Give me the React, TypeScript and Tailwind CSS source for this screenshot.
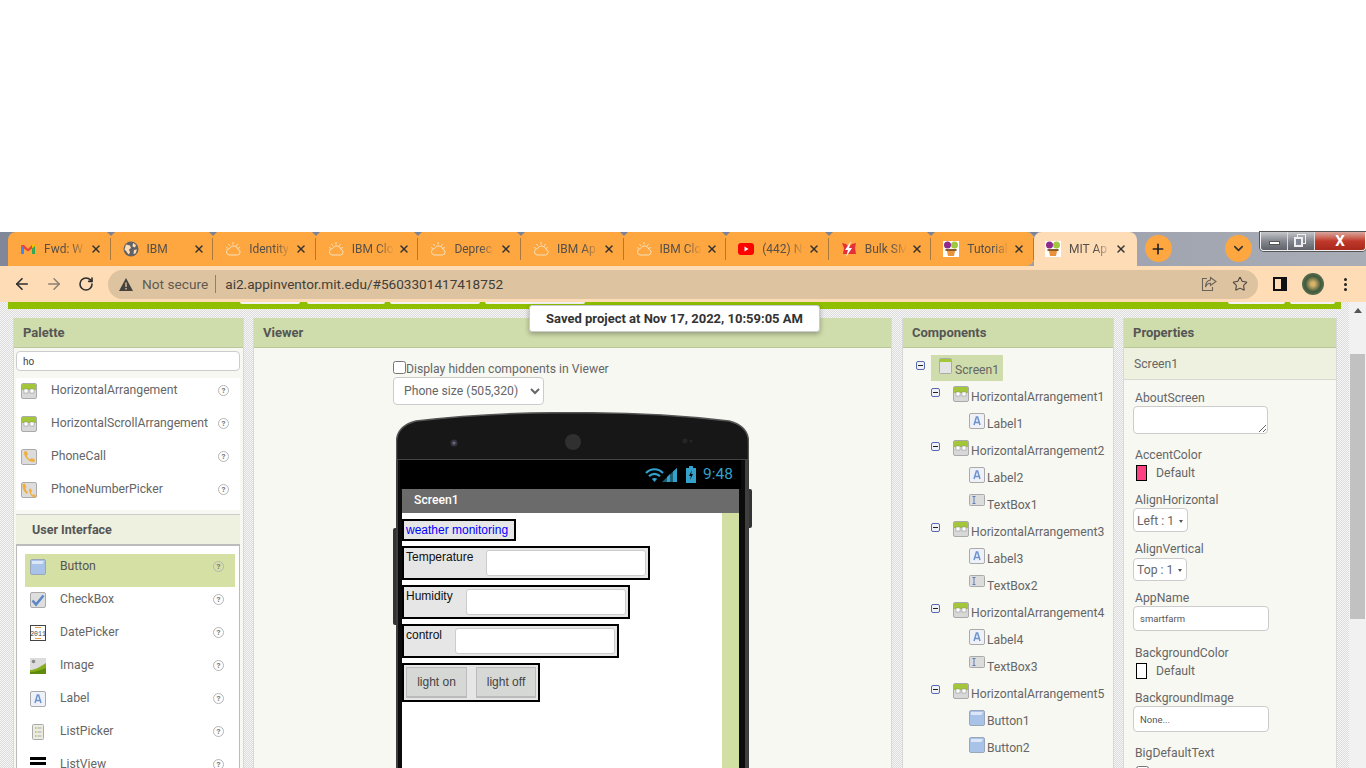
import React from "react"
import { ArrowLeft, ArrowRight, RotateCw, Star, ChevronDown, Plus, X } from "lucide-react"

const TABS = [
  { title: "Fwd: W", icon: "gmail" },
  { title: "IBM", icon: "globe" },
  { title: "Identity", icon: "cloud" },
  { title: "IBM Clo", icon: "cloud" },
  { title: "Deprec", icon: "cloud" },
  { title: "IBM Ap", icon: "cloud" },
  { title: "IBM Clo", icon: "cloud" },
  { title: "(442) N", icon: "youtube" },
  { title: "Bulk SM", icon: "bolt" },
  { title: "Tutorial", icon: "mit" },
]

function TabIcon({ name }: { name: string }) {
  if (name === "gmail")
    return (
      <svg width="16" height="16" viewBox="0 0 16 16">
        <path d="M1 4v9h3V7z" fill="#4285f4" />
        <path d="M15 4v9h-3V7z" fill="#34a853" />
        <path d="M1 4l3 0 4 4 4-4 3 0-3 3.500-4 3-4-3z" fill="#ea4335" />
        <path d="M12 3.500h3V5l-3 2.500z" fill="#fbbc04" />
      </svg>
    )
  if (name === "globe")
    return (
      <svg width="16" height="16" viewBox="0 0 16 16">
        <circle cx="8" cy="8" r="7.500" fill="#5f6368" />
        <path d="M3 3.500l4 1 1 2.500-2 1.500 1 3-1.500 2-2-3-2-2zM10 2l3 2-1 2.500-2.500-1zM11 9l3-.5-1.500 4-2 .5z" fill="#fedcb6" />
      </svg>
    )
  if (name === "cloud")
    return (
      <svg width="16" height="16" viewBox="0 0 16 16" fill="none" stroke="#f4e2bd" strokeWidth="1">
        <path d="M4 14h8.500a2.800 2.800 0 0 0 .5-5.500A4.500 4.500 0 0 0 4.500 7.500 3.300 3.300 0 0 0 4 14z" />
        <path d="M8 1v2.500M3.500 3l1.200 1.800M12.500 3l-1.200 1.800M1 6.500l1.800.8M15 6.500l-1.800.8" />
      </svg>
    )
  if (name === "youtube")
    return (
      <svg width="16" height="16" viewBox="0 0 16 16">
        <rect x="0" y="2" width="16" height="12" rx="3" fill="#f00" />
        <path d="M6.500 5.500v5l4-2.500z" fill="#fff" />
      </svg>
    )
  if (name === "bolt")
    return (
      <svg width="16" height="16" viewBox="0 0 16 16">
        <path d="M1 2l4 1 3 3 3-3 4-1-1 5 1 6H2l1-6z" fill="#e5303a" />
        <path d="M10 0L4 9h3l-2 7 6-9H8z" fill="#fff" />
      </svg>
    )
  return (
    <svg width="16" height="16" viewBox="0 0 16 16">
      <rect width="16" height="16" fill="#fff" />
      <circle cx="4.500" cy="4" r="3.500" fill="#8e2a8b" />
      <circle cx="11.500" cy="4" r="3.500" fill="#9fc93c" />
      <rect x="2.500" y="8" width="11" height="2" fill="#8a5a2b" />
      <path d="M4 10h8l-1 5H5z" fill="#e8923a" />
    </svg>
  )
}

function Tab({ title, icon, active }: { title: string; icon: string; active?: boolean }) {
  return (
    <div
      className={
        active
          ? "flex items-center h-[34px] w-[103px] bg-[#fedcb6] rounded-t-[8px] pl-[11px] shrink-0"
          : "flex items-center h-[34px] w-[102.6px] pl-[12px] shrink-0 relative"
      }
    >
      <TabIcon name={icon} />
      <span className="ml-[8px] w-[44px] overflow-hidden whitespace-nowrap text-[12px] text-[#55504a] [mask-image:linear-gradient(90deg,#000_60%,transparent_95%)]">
        {title}
      </span>
      <X size={12} strokeWidth={3} className="ml-[2px] text-[#333]" />
      {!active && <span className="absolute right-0 top-[6px] h-[22px] w-px bg-[#a87a3e]" />}
      {!active && <span className="absolute right-[-4px] top-0 w-0 h-0 border-x-[4px] border-x-transparent border-t-[4px] border-t-[#7b8296]" />}
    </div>
  )
}

function WindowControls() {
  return (
    <div className="ml-auto flex h-[19px] w-[106px] rounded-b-[4px] border border-t-0 border-[#f0f1f4] overflow-hidden shadow-[0_0_0_1px_#555]">
      <div className="w-[27px] bg-gradient-to-b from-[#c4c6ca] via-[#85888f] to-[#5f6268] border-r border-[#d8dade] flex items-center justify-center">
        <span className="w-[11px] h-[4px] bg-white mt-[3px] border border-[#555]" />
      </div>
      <div className="relative w-[27px] bg-gradient-to-b from-[#c4c6ca] via-[#85888f] to-[#5f6268] border-r border-[#d8dade]">
        <span className="absolute left-[9px] top-[2px] w-[9px] h-[10px] border border-[#eee]" />
        <span className="absolute left-[6px] top-[5px] w-[9px] h-[10px] border-2 border-[#eee] bg-[#7f8592]" />
      </div>
      <div className="flex-1 bg-gradient-to-b from-[#d8a59c] via-[#c0392b] to-[#a8281c] flex items-center justify-center text-white font-bold text-[15px] leading-none">
        X
      </div>
    </div>
  )
}

function TabStrip() {
  return (
    <div className="h-[34px] flex items-start bg-gradient-to-r from-[#7f8798] via-[#8d93a4] to-[#a9adb6]">
      <div className="ml-[8px] flex bg-[#fea63f] rounded-t-[8px] rounded-br-[8px]">
        {TABS.map((t, i) => (
          <Tab key={i} title={t.title} icon={t.icon} />
        ))}
      </div>
      <Tab title="MIT Ap" icon="mit" active />
      <div className="ml-[8px] mt-[3px] w-[27px] h-[27px] rounded-full bg-[#fea63f] flex items-center justify-center text-[#222]">
        <Plus size={16} strokeWidth={2.500} />
      </div>
      <div className="ml-[53px] mt-[3px] w-[27px] h-[27px] rounded-full bg-[#fea63f] flex items-center justify-center text-[#333]">
        <ChevronDown size={15} strokeWidth={2.500} />
      </div>
      <WindowControls />
    </div>
  )
}

function Toolbar() {
  return (
    <div className="h-[36px] bg-[#fedcb6] flex items-center text-[#2e2e2e]">
      <ArrowLeft size={18} strokeWidth={2.200} className="ml-[13px]" />
      <ArrowRight size={18} strokeWidth={2} className="ml-[14px] text-[#8b8073]" />
      <RotateCw size={16} strokeWidth={2.400} className="ml-[15px]" />
      <div className="ml-[14px] w-[1150px] h-[29px] rounded-full bg-[#dec3a0] flex items-center pl-[11px]">
        <svg width="14" height="13" viewBox="0 0 14 13">
          <path d="M7 0l7 13H0z" fill="#45413c" />
          <rect x="6.300" y="4.500" width="1.400" height="4.500" fill="#dec3a0" />
          <rect x="6.300" y="10" width="1.400" height="1.500" fill="#dec3a0" />
        </svg>
        <span className="ml-[9px] text-[13.700px] text-[#5f5a52]">Not secure</span>
        <span className="ml-[7px] h-[18px] w-px bg-[#8a8174]" />
        <span className="ml-[9px] text-[13.600px] text-[#413d37]">ai2.appinventor.mit.edu/#5603301417418752</span>
        <svg className="ml-auto" width="16" height="16" viewBox="0 0 16 16" fill="none" stroke="#6a645b" strokeWidth="1.100">
          <path d="M6 2.500H1.500v12h10V11" />
          <path d="M9.500 1.500L15 5.500 9.500 9.500V7.200C7 7.200 5.500 8.500 4.500 11 4.500 7.500 6.500 4.500 9.500 4z" />
        </svg>
        <Star size={16} strokeWidth={1.600} className="ml-[15px] mr-[10px] text-[#4a453e]" />
      </div>
      <svg className="ml-[15px]" width="14" height="14" viewBox="0 0 14 14">
        <rect width="14" height="14" fill="#111" />
        <rect x="2" y="2" width="6" height="10" fill="#fedcb6" />
      </svg>
      <div className="ml-[15px] w-[22px] h-[22px] rounded-full bg-[radial-gradient(circle,#d9b36a_12%,#3f5a3c_50%,#7d8a6c_100%)]" />
      <div className="ml-[20px] flex flex-col gap-[2px]">
        <span className="w-[3px] h-[3px] rounded-full bg-[#222]" />
        <span className="w-[3px] h-[3px] rounded-full bg-[#222]" />
        <span className="w-[3px] h-[3px] rounded-full bg-[#222]" />
      </div>
    </div>
  )
}

function Ico({ name }: { name: string }) {
  if (name === "ha")
    return (
      <svg width="16" height="16" viewBox="0 0 16 16" className="shrink-0">
        <rect x="0.500" y="0.500" width="15" height="15" rx="1.500" fill="#d8d8d8" stroke="#aaa" />
        <path d="M1 2a1 1 0 0 1 1-1h12a1 1 0 0 1 1 1v5H1z" fill="#a4c639" />
        <rect x="3" y="6" width="4" height="4" fill="#fff" stroke="#888" strokeWidth="0.500" />
        <rect x="9" y="6" width="4" height="4" fill="#fff" stroke="#888" strokeWidth="0.500" />
      </svg>
    )
  if (name === "label")
    return (
      <svg width="16" height="16" viewBox="0 0 16 16" className="shrink-0">
        <rect x="0.500" y="0.500" width="15" height="15" rx="1.500" fill="#eef1f7" stroke="#aaa" />
        <path d="M5 12L7.400 4h1.200L11 12M6 9.500h4" fill="none" stroke="#6d93cf" strokeWidth="1.500" />
      </svg>
    )
  if (name === "textbox")
    return (
      <svg width="16" height="12" viewBox="0 0 16 12" className="shrink-0">
        <rect x="0.500" y="0.500" width="15" height="11" rx="1" fill="#dcdcdc" stroke="#aaa" />
        <path d="M3.500 2.500h3M3.500 9.500h3M5 2.500v7" fill="none" stroke="#5f7fb5" />
      </svg>
    )
  if (name === "button")
    return (
      <svg width="16" height="16" viewBox="0 0 16 16" className="shrink-0">
        <rect x="0.500" y="0.500" width="15" height="15" rx="1.500" fill="#a9c2e8" stroke="#9aa7bb" />
        <path d="M2 2h12l-1.500 3H2z" fill="#dbe6f6" />
      </svg>
    )
  if (name === "check")
    return (
      <svg width="16" height="16" viewBox="0 0 16 16" className="shrink-0">
        <rect x="0.500" y="0.500" width="15" height="15" rx="1.500" fill="#dedede" stroke="#aaa" />
        <path d="M2.500 8.500l3.500 4 7.500-9" fill="none" stroke="#5b86c7" strokeWidth="2.500" />
      </svg>
    )
  if (name === "date")
    return (
      <svg width="16" height="16" viewBox="0 0 16 16" className="shrink-0">
        <rect x="0.500" y="0.500" width="15" height="15" fill="#fff" stroke="#444" />
        <path d="M5 2.500h6M5 13.500h6" stroke="#e8a04a" />
        <text x="8" y="10.500" fontSize="6.500" fontFamily="Liberation Mono" textAnchor="middle" fill="#444">2011</text>
      </svg>
    )
  if (name === "image")
    return (
      <svg width="16" height="16" viewBox="0 0 16 16" className="shrink-0">
        <rect width="16" height="16" fill="#dcdcdc" />
        <circle cx="3.500" cy="3.500" r="1.800" fill="#888" />
        <path d="M0 12c5 0 8-2 16-7v11H0z" fill="#86ad1c" />
        <path d="M0 14c6 0 10-2 16-4v6H0z" fill="#5f8a0c" />
      </svg>
    )
  if (name === "list")
    return (
      <svg width="16" height="16" viewBox="0 0 16 16" className="shrink-0">
        <rect x="2.500" y="0.500" width="11" height="15" rx="1" fill="#ecece2" stroke="#aaa" />
        <path d="M5 4h1.500M5 8h1.500M5 12h1.500" stroke="#a4c639" strokeWidth="1.500" />
        <path d="M7.500 4h4M7.500 8h4M7.500 12h4" stroke="#aaa" />
      </svg>
    )
  if (name === "listview")
    return (
      <svg width="16" height="16" viewBox="0 0 16 16" className="shrink-0">
        <rect y="0" width="16" height="3" fill="#000" />
        <rect y="5" width="16" height="3" fill="#000" />
      </svg>
    )
  if (name === "phone")
    return (
      <svg width="16" height="16" viewBox="0 0 16 16" className="shrink-0">
        <rect x="0.500" y="0.500" width="15" height="15" rx="1.500" fill="#dcdcdc" stroke="#aaa" />
        <path d="M3 2.500L5.500 2 7 5.500 5.700 6.800c.5 1.500 2 3 3.500 3.500L10.500 9 14 10.500 13.500 13c-5 1-11-5-10.500-10.500z" fill="#f0b040" />
      </svg>
    )
  if (name === "phonepick")
    return (
      <svg width="16" height="16" viewBox="0 0 16 16" className="shrink-0">
        <rect x="0.500" y="0.500" width="15" height="15" rx="1.500" fill="#dcdcdc" stroke="#aaa" />
        <path d="M1.500 2L4 1.500 5.500 5 4.500 6c.3 1.500 1 3 2.500 4L6 12C3 10 1 6 1.500 2z" fill="#f0b040" />
        <path d="M8 7l2-.5 1 3-1 1c.3 1 .6 1.500 1.500 2.500L13 12l2 2-1 1.500C10 15 8 11 8 7z" fill="#f0b040" />
      </svg>
    )
  return (
    <svg width="13" height="16" viewBox="0 0 13 16" className="shrink-0">
      <rect x="0.500" y="0.500" width="12" height="15" rx="1" fill="#e4e4e4" stroke="#aaa" />
      <rect x="1" y="1" width="11" height="3" fill="#a4c639" />
    </svg>
  )
}

function Help() {
  return (
    <span className="w-[11px] h-[11px] rounded-full border border-[#b5b5b5] text-[8px] leading-[9px] font-bold text-[#777] text-center shrink-0">
      ?
    </span>
  )
}

function PaletteRow({ icon, name, active }: { icon: string; name: string; active?: boolean }) {
  return (
    <div className={active ? "h-[33px] flex pl-[5px] pr-[11px] bg-[#d5e0a5] text-[#555]" : "h-[33px] flex pl-[5px] pr-[11px] text-[#666]"}>
      <div className="mt-[5px]">
        <Ico name={icon} />
      </div>
      <span className="ml-[14px] mt-[5px] text-[12.200px] leading-[14px]">{name}</span>
      <span className="ml-auto mt-[7px] flex">
        <Help />
      </span>
    </div>
  )
}

function PanelHead({ title }: { title: string }) {
  return (
    <div className="h-[30px] shrink-0 bg-[#cfdcab] border-b border-[#b9c79a] flex items-center pl-[9px] text-[13px] font-bold text-[#555]">
      {title}
    </div>
  )
}

function Palette() {
  return (
    <div className="w-[231px] shrink-0 bg-[#f7f8f2] flex flex-col border-x border-[#d8d8d8]">
      <PanelHead title="Palette" />
      <div className="ml-[2px] mr-[3px] pt-[3px]">
        <input readOnly value="ho" className="block w-full h-[20px] bg-white border border-[#ccc] rounded-[4px] px-[6px] text-[10px] text-[#444] outline-none" />
      </div>
      <div className="ml-[2px] mr-[3px] mt-[7px] bg-white h-[132px]">
        <PaletteRow icon="ha" name="HorizontalArrangement" />
        <PaletteRow icon="ha" name="HorizontalScrollArrangement" />
        <PaletteRow icon="phone" name="PhoneCall" />
        <PaletteRow icon="phonepick" name="PhoneNumberPicker" />
      </div>
      <div className="ml-[2px] mr-[3px] mt-[4px] h-[32px] shrink-0 bg-[#eef1e0] border-t border-b-2 border-t-[#ccc] border-b-[#bbb] flex items-center pl-[16px] pt-[2px] text-[12.500px] font-bold text-[#555]">
        User Interface
      </div>
      <div className="ml-[2px] mr-[3px] bg-white border-x border-[#bbb] pt-[8px] pl-[8px] pr-[4px] flex-1">
        <PaletteRow icon="button" name="Button" active />
        <PaletteRow icon="check" name="CheckBox" />
        <PaletteRow icon="date" name="DatePicker" />
        <PaletteRow icon="image" name="Image" />
        <PaletteRow icon="label" name="Label" />
        <PaletteRow icon="list" name="ListPicker" />
        <PaletteRow icon="listview" name="ListView" />
      </div>
    </div>
  )
}

function PhoneRow({ width, height, children }: { width: string; height: string; children: React.ReactNode }) {
  return <div className={`${width} ${height} border-[2px] border-black bg-[#e6e6e6] flex shrink-0 font-['Liberation_Sans',sans-serif] text-[12px] leading-[14px]`}>{children}</div>
}

function Phone() {
  return (
    <div className="relative ml-[142px] mt-[7px] w-[353px] h-[400px] flex flex-col shrink-0">
      <div className="absolute left-[-3px] top-[116px] w-[3px] h-[97px] bg-[#333] rounded-l-[2px]" />
      <div className="absolute right-[-3px] top-[77px] w-[3px] h-[39px] bg-[#333] rounded-r-[2px]" />
      <svg width="353" height="48" viewBox="0 0 353 48" className="block shrink-0">
        <path d="M0.500 48V30Q0.500 14 20 9Q95 0 176 0.800Q258 0 333 9Q352.500 14 352.500 30V48z" fill="#171717" stroke="#555" strokeWidth="1.500" />
        <circle cx="58" cy="31" r="3.500" fill="#33333e" />
        <circle cx="58" cy="31" r="1.500" fill="#6a6a88" />
        <circle cx="177" cy="30" r="8" fill="#303030" />
        <circle cx="289" cy="29" r="2.500" fill="#262626" />
        <circle cx="295" cy="29" r="1.500" fill="#262626" />
      </svg>
      <div className="flex-1 min-h-0 flex flex-col bg-[#0c0c0c] border-l-2 border-r-[4px] border-[#3f3f3f]">
        <div className="ml-[2px] w-[341px] h-[29px] bg-black shrink-0 flex items-center justify-end pr-[8px]">
          <svg width="33" height="16" viewBox="0 0 33 16" fill="none">
            <path d="M1 6C6 1 13 1 18 6" stroke="#33a1c9" strokeWidth="2.200" />
            <path d="M4 9.200C7.500 6.200 11.500 6.200 15 9.200" stroke="#33a1c9" strokeWidth="2.200" />
            <path d="M6.800 11.800C8.500 10.600 10.500 10.600 12.200 11.800L9.500 15z" fill="#33a1c9" />
            <path d="M17 15L32 1v14z" fill="#1e5f78" />
            <path d="M22 15v-5l3-3v8zM28 15V4.500l4-3.500v14z" fill="#33a1c9" />
          </svg>
          <svg className="ml-[8px]" width="10" height="17" viewBox="0 0 10 17">
            <rect x="0" y="2" width="10" height="15" fill="#33a1c9" />
            <rect x="3" y="0" width="4" height="2" fill="#33a1c9" />
            <path d="M6 4L3 10h2l-1 4 3-6H5z" fill="#000" />
          </svg>
          <span className="ml-[7px] text-[15.500px] text-[#33a1c9]">9:48</span>
        </div>
        <div className="ml-[4px] w-[337px] h-[24px] bg-[#6b6b6b] shrink-0 flex items-center pl-[12px] pb-[2px] text-white text-[12.200px] font-medium">Screen1</div>
        <div className="ml-[4px] w-[337px] flex-1 bg-white flex">
          <div className="w-[320px] flex flex-col gap-[5px] pt-[6px]">
            <PhoneRow width="w-[114px]" height="h-[22px]">
              <span className="ml-[2px] mt-[2px] text-[#0000ff]">weather monitoring</span>
            </PhoneRow>
            <PhoneRow width="w-[248px]" height="h-[34px]">
              <span className="ml-[2px] mt-[2px] w-[80px] text-[#111]">Temperature</span>
              <span className="mt-[2px] w-[160px] h-[26px] rounded-[3px] bg-white border border-[#ccc]" />
            </PhoneRow>
            <PhoneRow width="w-[228px]" height="h-[34px]">
              <span className="ml-[2px] mt-[2px] w-[60px] text-[#111]">Humidity</span>
              <span className="mt-[2px] w-[160px] h-[26px] rounded-[3px] bg-white border border-[#ccc]" />
            </PhoneRow>
            <PhoneRow width="w-[217px]" height="h-[34px]">
              <span className="ml-[2px] mt-[2px] w-[49px] text-[#111]">control</span>
              <span className="mt-[2px] w-[160px] h-[26px] rounded-[3px] bg-white border border-[#ccc]" />
            </PhoneRow>
            <PhoneRow width="w-[138px]" height="h-[39px]">
              <span className="ml-[2px] mt-[2px] w-[61px] h-[31px] bg-[#d6d8d6] border border-[#bbb] border-b-2 flex items-center justify-center text-[#444]">light on</span>
              <span className="ml-[9px] mt-[2px] w-[60px] h-[31px] bg-[#d6d8d6] border border-[#bbb] border-b-2 flex items-center justify-center text-[#444]">light off</span>
            </PhoneRow>
          </div>
          <div className="w-[17px] bg-[#d2dfa3]" />
        </div>
      </div>
    </div>
  )
}

function Viewer() {
  return (
    <div className="ml-[9px] w-[639px] shrink-0 bg-[#f7f8f2] flex flex-col border-x border-[#d8d8d8]">
      <PanelHead title="Viewer" />
      <div className="pl-[139px] mt-[13px] flex items-center h-[13px] text-[12.200px] text-[#666]">
        <input type="checkbox" readOnly className="w-[13px] h-[13px] m-0" />
        <span className="mt-[4px]">Display hidden components in Viewer</span>
      </div>
      <div className="pl-[139px] mt-[3px]">
        <select defaultValue="p" className="block w-[151px] h-[28px] bg-white border border-[#ccc] rounded-[4px] pl-[6px] text-[12.200px] text-[#666]">
          <option value="p">Phone size (505,320)</option>
        </select>
      </div>
      <Phone />
    </div>
  )
}

const TREE = [
  ["ha", "HorizontalArrangement1"], ["label", "Label1"],
  ["ha", "HorizontalArrangement2"], ["label", "Label2"], ["textbox", "TextBox1"],
  ["ha", "HorizontalArrangement3"], ["label", "Label3"], ["textbox", "TextBox2"],
  ["ha", "HorizontalArrangement4"], ["label", "Label4"], ["textbox", "TextBox3"],
  ["ha", "HorizontalArrangement5"], ["button", "Button1"], ["button", "Button2"],
]

function Minus() {
  return (
    <span className="w-[9px] h-[9px] shrink-0 rounded-[2px] border border-[#5a6ab0] bg-[#f0f2fa] flex items-center justify-center">
      <span className="w-[5px] h-px bg-[#222]" />
    </span>
  )
}

function Components() {
  return (
    <div className="ml-[10px] w-[212px] shrink-0 bg-[#f7f8f2] flex flex-col border-x border-[#d8d8d8]">
      <PanelHead title="Components" />
      <div className="pl-[13px] pt-[7px] text-[12.200px] leading-[14px] text-[#666]">
        <div className="flex h-[26px]">
          <div className="mt-[6px]"><Minus /></div>
          <div className="ml-[6px] w-[72px] bg-[#cfdcab] flex pl-[8px] pt-[3px]">
            <Ico name="screen" />
            <span className="ml-[3px] mt-[5px]">Screen1</span>
          </div>
        </div>
        <div className="pl-[15px] pt-[2px]">
          {TREE.map(([icon, name]) =>
            icon === "ha" ? (
              <div key={name} className="flex h-[27px]">
                <div className="mt-[5px]"><Minus /></div>
                <div className="ml-[13px] mt-[3px]"><Ico name="ha" /></div>
                <span className="ml-[2px] mt-[7px] whitespace-nowrap">{name}</span>
              </div>
            ) : (
              <div key={name} className="flex h-[27px] pl-[38px]">
                <div className="mt-[3px]"><Ico name={icon} /></div>
                <span className="ml-[2px] mt-[7px]">{name}</span>
              </div>
            )
          )}
        </div>
      </div>
    </div>
  )
}

function Prop({ label, mt }: { label: string; mt: string }) {
  return <div className={`${mt} ml-[2px] h-[14px] text-[12.200px] leading-[16px] text-[#666]`}>{label}</div>
}

function Swatch({ color, mt }: { color: string; mt: string }) {
  return (
    <div className={`${mt} flex items-center ml-[3px] h-[16px] text-[12.200px] text-[#666]`}>
      <span className={`w-[11px] h-[16px] border border-black ${color}`} />
      <span className="ml-[9px]">Default</span>
    </div>
  )
}

function PropSelect({ text, w, h, mt }: { text: string; w: string; h: string; mt: string }) {
  return (
    <div className={`${mt} ${w} ${h} bg-white border border-[#ccc] rounded-[4px] flex items-center pl-[3px] pt-[2px] text-[12.200px] text-[#666]`}>
      {text}
      <span className="ml-[5px] w-0 h-0 border-x-[2.500px] border-x-transparent border-t-[3px] border-t-[#555]" />
    </div>
  )
}

function Properties() {
  const inputCls = "w-[136px] bg-white border border-[#ccc] rounded-[4px] px-[6px] text-[9.500px] text-[#555] outline-none block"
  return (
    <div className="ml-[9px] w-[214px] shrink-0 bg-[#f7f8f2] flex flex-col border-x border-[#d8d8d8]">
      <PanelHead title="Properties" />
      <div className="h-[32px] shrink-0 bg-[#eef1e0] border-b border-[#d8d8d0] flex items-center pl-[10px] pt-[2px] text-[12.200px] text-[#666]">Screen1</div>
      <div className="pl-[9px] pt-[10px]">
        <Prop label="AboutScreen" mt="mt-0" />
        <textarea readOnly className="mt-[2px] block w-[135px] h-[28px] bg-white border border-[#ccc] rounded-[4px] outline-none" />
        <Prop label="AccentColor" mt="mt-[13px]" />
        <Swatch color="bg-[#ff4081]" mt="mt-[4px]" />
        <Prop label="AlignHorizontal" mt="mt-[11px]" />
        <PropSelect text="Left : 1" w="w-[55px]" h="h-[24px]" mt="mt-[2px]" />
        <Prop label="AlignVertical" mt="mt-[9px]" />
        <PropSelect text="Top : 1" w="w-[54px]" h="h-[23px]" mt="mt-[3px]" />
        <Prop label="AppName" mt="mt-[9px]" />
        <input readOnly value="smartfarm" className={`mt-[2px] h-[25px] ${inputCls}`} />
        <Prop label="BackgroundColor" mt="mt-[14px]" />
        <Swatch color="bg-white" mt="mt-[4px]" />
        <Prop label="BackgroundImage" mt="mt-[11px]" />
        <input readOnly value="None..." className={`mt-[2px] h-[26px] ${inputCls}`} />
        <Prop label="BigDefaultText" mt="mt-[13px]" />
        <input type="checkbox" readOnly className="mt-[7px] ml-[3px] w-[13px] h-[13px] block" />
      </div>
    </div>
  )
}

function TopBar() {
  const stubs = ["ml-[232px] w-[60px]", "ml-[7px] w-[78px]", "ml-[5px] w-[90px]", "ml-[5px] w-[100px]", "ml-[643px] w-[57px]", "ml-[5px] w-[45px]"]
  return (
    <div className="ml-[8px] w-[1333px] h-[7px] bg-[#8fbf00] flex items-start shrink-0">
      {stubs.map((s) => (
        <span key={s} className={`${s} h-[2px] bg-[#f2f2f2] rounded-b-[2px]`} />
      ))}
    </div>
  )
}

export default function App() {
  return (
    <div className="relative w-[1366px] h-[768px] overflow-hidden bg-white flex flex-col font-['Roboto',sans-serif]">
      <div className="h-[232px] shrink-0" />
      <TabStrip />
      <Toolbar />
      <div className="flex-1 min-h-0 flex">
        <div className="w-[1349px] shrink-0 flex flex-col bg-[repeating-conic-gradient(#dcdcdc_0%_25%,#f6f6f6_0%_50%)] bg-[length:2px_2px]">
          <TopBar />
          <div className="flex-1 min-h-0 flex pt-[9px] pl-[13px] overflow-hidden">
            <Palette />
            <Viewer />
            <Components />
            <Properties />
          </div>
        </div>
        <div className="flex-1 bg-[#f1f1f1] flex flex-col items-center pt-[6px]">
          <span className="w-0 h-0 border-x-[4px] border-x-transparent border-b-[5px] border-b-[#555]" />
          <div className="mt-[41px] w-[15px] h-[265px] bg-[#c1c1c1]" />
        </div>
      </div>
      <div className="absolute left-[529px] top-[305px] w-[291px] h-[27px] bg-white border border-[#ccc] rounded-[3px] shadow-[0_2px_5px_rgba(0,0,0,0.3)] flex items-center justify-center text-[13px] font-bold text-[#333]">
        Saved project at Nov 17, 2022, 10:59:05 AM
      </div>
    </div>
  )
}
